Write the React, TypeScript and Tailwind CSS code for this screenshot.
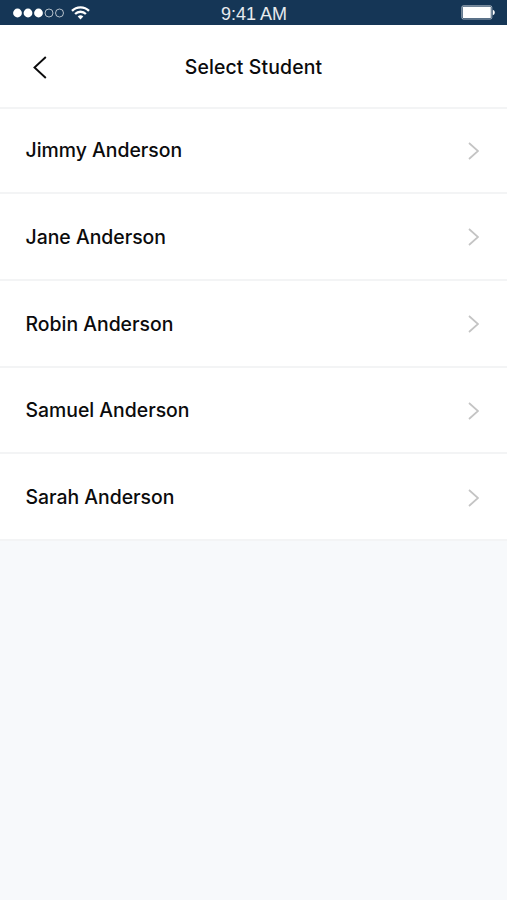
const students = [
  "Jimmy Anderson",
  "Jane Anderson",
  "Robin Anderson",
  "Samuel Anderson",
  "Sarah Anderson",
];

const StatusBar = () => {
  return (
    <div className="grid h-[25px] grid-cols-3 items-center bg-[#153656] pl-[13px] pr-3 text-white">
      <div className="flex items-center">
        <svg width="52" height="10" viewBox="0 0 52 10" fill="none">
          <circle cx="4.5" cy="5" r="4.4" fill="white" />
          <circle cx="15" cy="5" r="4.4" fill="white" />
          <circle cx="25.5" cy="5" r="4.4" fill="white" />
          <circle cx="36" cy="5" r="4" stroke="white" strokeOpacity="0.75" strokeWidth="0.9" />
          <circle cx="46.5" cy="5" r="4" stroke="white" strokeOpacity="0.75" strokeWidth="0.9" />
        </svg>
        <svg className="ml-1.5" width="19" height="14" viewBox="0 0 19 14" fill="none" stroke="white" strokeWidth="2.3">
          <path d="M1 4.9a12 12 0 0 1 17 0" />
          <path d="M4.1 8a7.6 7.6 0 0 1 10.8 0" />
          <path d="M9.5 13.4 6.7 10.6a4 4 0 0 1 5.6 0Z" fill="white" stroke="none" />
        </svg>
      </div>
      <p className="pt-[3px] text-center font-['Liberation_Sans',sans-serif] text-[18px] leading-none text-white/90">
        9:41 AM
      </p>
      <svg className="justify-self-end" width="34" height="15" viewBox="0 0 34 15" fill="none">
        <rect x="0.8" y="0.8" width="30" height="13.2" rx="1.5" stroke="white" strokeOpacity="0.6" />
        <rect x="1.8" y="1.8" width="28" height="11.2" rx="0.5" fill="white" />
        <path d="M31.8 4.8c2.6.6 2.6 5 0 5.5Z" fill="white" />
      </svg>
    </div>
  );
};

const StudentRow = ({ name }: { name: string }) => {
  return (
    <li className="flex h-[86.75px] items-center justify-between border-b-2 border-[#f3f4f5] bg-white pl-[25.5px] pr-7 pt-0.5 first:h-[85px] first:pt-0">
      <span className="text-[19.4px] font-medium">{name}</span>
      <svg width="11" height="18" viewBox="0 0 11 18" fill="none" stroke="#c4c4c4" strokeWidth="1.7">
        <path d="m1 1 9 8-9 8" />
      </svg>
    </li>
  );
};

const App = () => {
  return (
    <div className="min-h-screen bg-[#f7f9fb] font-['Inter',sans-serif] text-[#0b0b0c]">
      <StatusBar />
      <header className="grid h-[84px] grid-cols-[1fr_auto_1fr] items-center border-b-2 border-[#f3f4f5] bg-white px-[33px] pt-[3px]">
        <button aria-label="Back" className="mb-px">
          <svg width="14" height="23" viewBox="0 0 14 23" fill="none" stroke="currentColor" strokeWidth="1.9">
            <path d="M12.8 1 1.5 11.5 12.8 22" />
          </svg>
        </button>
        <h1 className="text-[19.4px] font-medium tracking-[0.14px]">Select Student</h1>
      </header>
      <ul>
        {students.map((name) => (
          <StudentRow key={name} name={name} />
        ))}
      </ul>
    </div>
  );
};

export default App;
